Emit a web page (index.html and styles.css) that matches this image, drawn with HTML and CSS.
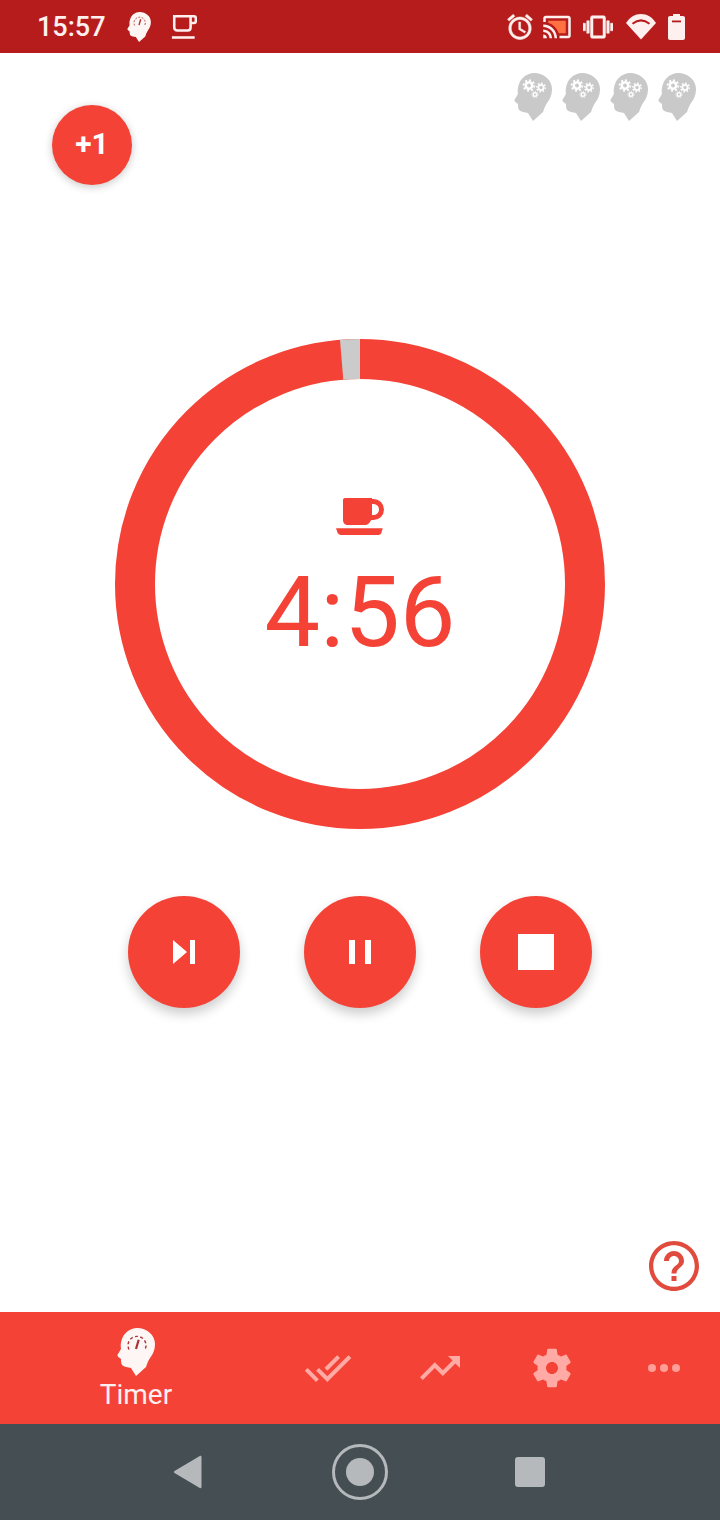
FILE: index.html
```html
<!DOCTYPE html>
<html lang="en">
<head>
    <meta charset="UTF-8">
    <meta name="viewport" content="width=device-width, initial-scale=1.0">
    <title>Timer</title>
    <link rel="stylesheet" href="styles.css">
</head>
<body>
    <svg class="defs" aria-hidden="true">
        <symbol id="head-gears" viewBox="0 0 38 48">
            <path class="head-gray" d="M20 0C30 0 38 7 38 16C38 22 36 26 33 30C31 33 30 36 29 39L19 48L14 40C11 39 7 39 5 37C4 35 4 33 4 31L2 29.500C.5 28.500 0 27 1 26L4 21C3.500 18 3.500 15 5 11C7 5 13 0 20 0Z"/>
            <circle class="gear" cx="15" cy="12.500" r="4.500"/>
            <circle class="gear-teeth" cx="15" cy="12.500" r="5.400" stroke-width="1.800" pathLength="16" stroke-dasharray="1 1"/>
            <circle class="gear-hole" cx="15" cy="12.500" r="1.900"/>
            <circle class="gear" cx="27" cy="14.500" r="3.500"/>
            <circle class="gear-teeth" cx="27" cy="14.500" r="4.300" stroke-width="1.400" pathLength="16" stroke-dasharray="1 1"/>
            <circle class="gear-hole" cx="27" cy="14.500" r="1.700"/>
            <circle class="gear" cx="21" cy="21.500" r="2.500"/>
            <circle class="gear-teeth" cx="21" cy="21.500" r="3.100" stroke-width="1" pathLength="16" stroke-dasharray="1 1"/>
            <circle class="gear-hole" cx="21" cy="21.500" r="1.100"/>
        </symbol>
        <symbol id="head-gauge" viewBox="0 0 38 48">
            <path class="head-white" d="M20 0C30 0 38 7 38 16C38 22 36 26 33 30C31 33 30 36 29 39L19 48L14 40C11 39 7 39 5 37C4 35 4 33 4 31L2 29.500C.5 28.500 0 27 1 26L4 21C3.500 18 3.500 15 5 11C7 5 13 0 20 0Z"/>
            <path class="gauge-arc" d="M12 21.500A9 9 0 1 1 28 21.500" stroke-dasharray="3 2.400"/>
            <path class="gauge-needle" d="M21.700 11.700L19 21"/>
        </symbol>
    </svg>

    <div class="status-bar">
        <div class="status-left">
            <span class="clock">15:57</span>
            <svg class="status-head"><use href="#head-gauge"/></svg>
            <svg class="status-cup" viewBox="0 0 24 24">
                <path class="cup-line" d="M4.500 2.800H18.500V12.500C18.500 14 17.500 15 16 15H7C5.500 15 4.500 14 4.500 12.500Z"/>
                <path class="cup-line" d="M18.500 2.800H21.500C22.300 2.800 23 3.500 23 4.300V7C23 7.800 22.300 8.500 21.500 8.500H18.500"/>
                <path class="cup-line" d="M2.500 21H22"/>
            </svg>
        </div>
        <div class="status-right">
            <svg class="status-icon icon-alarm" viewBox="0 0 24 24"><path d="M22 5.720l-4.600-3.860-1.290 1.530 4.600 3.860L22 5.720zM7.880 3.390L6.600 1.860 2 5.710l1.290 1.530 4.590-3.850zM12.500 8H11v6l4.750 2.850.75-1.230-4-2.370V8zM12 4c-4.970 0-9 4.030-9 9s4.030 9 9 9 9-4.030 9-9-4.030-9-9-9zm0 16c-3.870 0-7-3.130-7-7s3.130-7 7-7 7 3.130 7 7-3.130 7-7 7z"/></svg>
            <svg class="status-icon icon-cast" viewBox="0 0 24 24">
                <path class="cast-fill" d="M19 7H5v1.630c3.960 1.280 7.090 4.410 8.370 8.370H19V7z"/>
                <path d="M1 18v3h3c0-1.660-1.340-3-3-3zm0-4v2c2.760 0 5 2.240 5 5h2c0-3.870-3.130-7-7-7zM1 10v2c4.970 0 9 4.030 9 9h2c0-6.080-4.930-11-11-11zm20-7H3c-1.100 0-2 .9-2 2v3h2V5h18v14h-7v2h7c1.100 0 2-.9 2-2V5c0-1.100-.9-2-2-2z"/>
            </svg>
            <svg class="status-icon icon-vibrate" viewBox="0 0 24 24"><path d="M0 15h2V9H0v6zm3 2h2V7H3v10zm19-8v6h2V9h-2zm-3 8h2V7h-2v10zM16.500 3h-9C6.670 3 6 3.670 6 4.500v15c0 .83.67 1.500 1.500 1.500h9c.83 0 1.500-.67 1.500-1.500v-15c0-.83-.67-1.500-1.500-1.500zM16 19H8V5h8v14z"/></svg>
            <svg class="status-icon icon-wifi" viewBox="0 0 30 26">
                <path d="M0 9C4 3 9 0 15 0C21 0 26 3 30 9L15 25.500Z"/>
                <path class="wifi-slot" d="M6.500 9.800Q15 3 23.500 9.800"/>
            </svg>
            <svg class="status-icon icon-battery" viewBox="0 0 17 26">
                <path d="M5 0H12V2H15C16.100 2 17 2.900 17 4V24C17 25.100 16.100 26 15 26H2C.9 26 0 25.100 0 24V4C0 2.900 .9 2 2 2H5Z"/>
                <rect class="battery-slot" x="4" y="6.500" width="9" height="1.800"/>
            </svg>
        </div>
    </div>

    <div class="main">
        <div class="top-row">
            <button class="plus-one">+1</button>
            <div class="heads">
                <svg class="head"><use href="#head-gears"/></svg>
                <svg class="head"><use href="#head-gears"/></svg>
                <svg class="head"><use href="#head-gears"/></svg>
                <svg class="head"><use href="#head-gears"/></svg>
            </div>
        </div>

        <div class="ring-wrap">
            <svg class="ring" viewBox="0 0 490 490">
                <circle class="ring-track" cx="245" cy="245" r="225"/>
                <path class="ring-gap" d="M225 .82A245 245 0 0 1 245 0V40A205 205 0 0 0 228.300 40.700Z"/>
            </svg>
            <div class="ring-center">
                <svg class="break-cup" viewBox="0 0 48 38">
                    <path fill-rule="evenodd" d="M9 0H36V1.100A10.500 10.500 0 0 1 37.500 1A10.500 10.500 0 0 1 37.500 22H35.200C33.800 25 31.500 27 29 27H12C9 27 7 25 7 22V2C7 .9 7.900 0 9 0ZM36 6H37.500A5.500 5.500 0 0 1 37.500 17H36Z"/>
                    <path d="M0 30.300H46.700L45.500 34.500C45 36 44 37 42.500 37H5C3.500 37 2 36 1.500 34.500Z"/>
                </svg>
                <div class="time">4:56</div>
            </div>
        </div>

        <div class="controls">
            <button class="round-btn">
                <svg class="control-icon" viewBox="0 0 24 24"><path d="M1 0L15 12L1 24ZM18 0H23V24H18Z"/></svg>
            </button>
            <button class="round-btn">
                <svg class="control-icon" viewBox="0 0 24 24"><path d="M1 0H7V24H1ZM17 0H23V24H17Z"/></svg>
            </button>
            <button class="round-btn">
                <span class="stop-square"></span>
            </button>
        </div>

        <div class="help-row">
            <svg class="help" viewBox="0 0 24 24"><path d="M11 18h2v-2h-2v2zm1-16C6.480 2 2 6.480 2 12s4.480 10 10 10 10-4.480 10-10S17.520 2 12 2zm0 18.300c-4.580 0-8.300-3.720-8.300-8.300s3.720-8.300 8.300-8.300 8.300 3.720 8.300 8.300-3.720 8.300-8.300 8.300zM12 6c-2.210 0-4 1.790-4 4h2c0-1.100.9-2 2-2s2 .9 2 2c0 2-3 1.750-3 5h2c0-2.250 3-2.500 3-5 0-2.210-1.790-4-4-4z"/></svg>
        </div>
    </div>

    <div class="tab-bar">
        <div class="tab tab-active">
            <svg class="tab-head"><use href="#head-gauge"/></svg>
            <span class="tab-label">Timer</span>
        </div>
        <div class="tab">
            <svg class="tab-icon" viewBox="0 0 24 24"><path d="M18 7l-1.410-1.410-6.340 6.340 1.410 1.410L18 7zm4.240-1.410L11.660 16.170 7.480 12l-1.410 1.410L11.660 19l12-12-1.420-1.410zM.41 13.410L6 19l1.410-1.410L1.830 12 .41 13.410z"/></svg>
        </div>
        <div class="tab">
            <svg class="tab-icon" viewBox="0 0 24 24"><path d="M16 6l2.290 2.290-4.880 4.880-4-4L2 16.590 3.410 18l6-6 4 4 6.300-6.290L22 12V6z"/></svg>
        </div>
        <div class="tab">
            <svg class="tab-icon" viewBox="0 0 24 24"><path d="M19.140 12.940c.04-.3.06-.61.06-.94 0-.32-.02-.64-.07-.94l2.030-1.580c.18-.14.23-.41.12-.61l-1.920-3.320c-.12-.22-.37-.29-.59-.22l-2.390.96c-.5-.38-1.030-.7-1.620-.94l-.36-2.540c-.04-.24-.24-.41-.48-.41h-3.840c-.24 0-.43.17-.47.41l-.36 2.540c-.59.24-1.130.57-1.620.94l-2.390-.96c-.22-.08-.47 0-.59.22L2.740 8.870c-.12.21-.08.47.12.61l2.030 1.580c-.05.3-.09.63-.09.94s.02.64.07.94l-2.030 1.580c-.18.14-.23.41-.12.61l1.920 3.320c.12.22.37.29.59.22l2.390-.96c.5.38 1.030.7 1.620.94l.36 2.540c.05.24.24.41.48.41h3.840c.24 0 .44-.17.47-.41l.36-2.540c.59-.24 1.130-.56 1.620-.94l2.390.96c.22.08.47 0 .59-.22l1.920-3.320c.12-.22.07-.47-.12-.61l-2.010-1.580zM12 15c-1.650 0-3-1.350-3-3s1.350-3 3-3 3 1.350 3 3-1.350 3-3 3z"/></svg>
        </div>
        <div class="tab">
            <span class="dots"><i></i><i></i><i></i></span>
        </div>
    </div>

    <div class="nav-bar">
        <svg class="nav-icon" viewBox="0 0 56 56"><path d="M39.500 13V43C39.500 44 38.500 44.500 37.800 44L12.500 29C11.800 28.500 11.800 27.500 12.500 27L37.800 12C38.500 11.500 39.500 12 39.500 13Z"/></svg>
        <svg class="nav-icon" viewBox="0 0 56 56">
            <circle class="nav-ring" cx="28" cy="28" r="26.500"/>
            <circle cx="28" cy="28" r="14"/>
        </svg>
        <svg class="nav-icon" viewBox="0 0 56 56"><rect x="13" y="13" width="30" height="30" rx="3"/></svg>
    </div>
</body>
</html>
```

FILE: styles.css
```css
* {
    box-sizing: border-box;
}
html, body {
    margin: 0;
    padding: 0;
}
body {
    width: 720px;
    height: 1520px;
    display: flex;
    flex-direction: column;
    overflow: hidden;
    background-color: #fff;
    font-family: Roboto, "Liberation Sans", sans-serif;
}
button {
    border: 0;
    padding: 0;
    font-family: inherit;
}
.defs {
    display: none;
}

/* status bar */
.status-bar {
    height: 53px;
    flex: none;
    display: flex;
    justify-content: space-between;
    align-items: center;
    background-color: #b71c1c;
    color: #fdf0ef;
    padding: 0 35px 0 37px;
}
.status-left {
    display: flex;
    align-items: center;
}
.clock {
    font-size: 27px;
    font-weight: 500;
    width: 90px;
}
.status-head {
    width: 24px;
    height: 30px;
    margin-right: 18px;
}
.status-cup {
    width: 28px;
    height: 28px;
}
.cup-line {
    fill: none;
    stroke: #fdf0ef;
    stroke-width: 2.2;
}
.status-right {
    display: flex;
    align-items: center;
}
.status-icon {
    fill: #fdf0ef;
    flex: none;
}
.icon-alarm {
    width: 30px;
    height: 30px;
    margin-right: 7px;
    stroke: #fdf0ef;
    stroke-width: 0.4;
}
.icon-cast {
    width: 30px;
    height: 30px;
    margin-right: 11px;
}
.icon-vibrate {
    width: 30px;
    height: 30px;
    margin-right: 13px;
    stroke: #fdf0ef;
    stroke-width: 0.4;
}
.icon-wifi {
    width: 30px;
    height: 26px;
    margin-right: 12px;
}
.icon-battery {
    width: 17px;
    height: 26px;
}
.cast-fill {
    fill: #ff7043;
}
.wifi-slot {
    fill: none;
    stroke: #b71c1c;
    stroke-width: 2;
}
.battery-slot {
    fill: #b71c1c;
}

/* main area */
.main {
    flex: 1;
    display: flex;
    flex-direction: column;
    align-items: center;
}
.top-row {
    width: 100%;
    height: 286px;
    display: flex;
    justify-content: space-between;
    align-items: flex-start;
    padding: 0 24px 0 52px;
}
.plus-one {
    width: 80px;
    height: 80px;
    margin-top: 52px;
    padding-bottom: 3px;
    border-radius: 50%;
    background-color: #f44336;
    color: #fff;
    font-size: 30px;
    font-weight: 700;
    box-shadow: 0 2px 8px rgba(0,0,0,0.22);
}
.heads {
    display: flex;
    gap: 10px;
    margin-top: 20px;
}
.head {
    width: 38px;
    height: 48px;
}
.head-gray {
    fill: #c9c9c9;
}
.head-white {
    fill: #fdf6f5;
}
.gear {
    fill: #fff;
}
.gear-teeth {
    fill: none;
    stroke: #fff;
}
.gear-hole {
    fill: #c9c9c9;
}
.gauge-arc {
    fill: none;
    stroke: #a33;
    stroke-width: 1.4;
}
.gauge-needle {
    fill: none;
    stroke: #a33;
    stroke-width: 2.2;
}

.ring-wrap {
    position: relative;
    width: 490px;
    height: 490px;
    flex: none;
}
.ring {
    display: block;
    width: 490px;
    height: 490px;
}
.ring-track {
    fill: none;
    stroke: #f44336;
    stroke-width: 40;
}
.ring-gap {
    fill: #cbcbcb;
}
.ring-center {
    position: absolute;
    top: 159px;
    left: 0;
    right: 0;
    display: flex;
    flex-direction: column;
    align-items: center;
}
.break-cup {
    width: 48px;
    height: 38px;
    fill: #f44336;
}
.time {
    font-size: 99px;
    line-height: 100px;
    margin-top: 26px;
    color: #f44336;
}

.controls {
    display: flex;
    gap: 64px;
    margin-top: 67px;
}
.round-btn {
    width: 112px;
    height: 112px;
    border-radius: 50%;
    background-color: #f44336;
    display: flex;
    justify-content: center;
    align-items: center;
    box-shadow: 0 6px 12px rgba(0,0,0,0.2);
}
.control-icon {
    width: 24px;
    height: 24px;
    fill: #fff;
}
.stop-square {
    width: 36px;
    height: 36px;
    background-color: #fff;
}
.help-row {
    margin-top: auto;
    width: 100%;
    display: flex;
    justify-content: flex-end;
    padding: 0 16px 16px 0;
}
.help {
    width: 60px;
    height: 60px;
    fill: #e14b3d;
}

/* bottom tabs */
.tab-bar {
    height: 112px;
    flex: none;
    display: flex;
    background-color: #f44336;
}
.tab {
    width: 112px;
    display: flex;
    flex-direction: column;
    justify-content: center;
    align-items: center;
}
.tab-active {
    width: 272px;
    justify-content: flex-start;
    padding-top: 16px;
}
.tab-head {
    width: 38px;
    height: 48px;
}
.tab-label {
    font-size: 28px;
    line-height: 32px;
    margin-top: 3px;
    color: #fdf0ef;
}
.tab-icon {
    width: 48px;
    height: 48px;
    fill: #ffaaa4;
}
.dots {
    display: flex;
    gap: 4px;
}
.dots i {
    width: 8px;
    height: 8px;
    border-radius: 50%;
    background-color: #ff9f98;
}

/* android nav */
.nav-bar {
    height: 96px;
    flex: none;
    display: flex;
    justify-content: center;
    align-items: center;
    gap: 114px;
    background-color: #454e53;
}
.nav-icon {
    width: 56px;
    height: 56px;
    fill: #b5b9bb;
}
.nav-ring {
    fill: none;
    stroke: #b5b9bb;
    stroke-width: 3;
}
```
